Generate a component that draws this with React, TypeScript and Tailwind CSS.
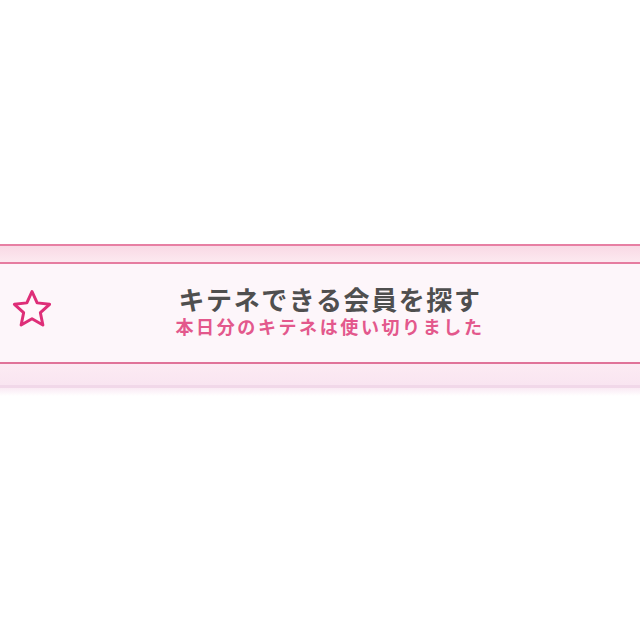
import React from "react";

function StarIcon() {
  // outline star, rounded joins
  const cx = 20;
  const cy = 21;
  const outer = 18.5;
  const inner = 8.8;
  const pts: string[] = [];
  for (let i = 0; i < 10; i++) {
    const r = i % 2 === 0 ? outer : inner;
    const a = (Math.PI / 5) * i - Math.PI / 2;
    pts.push(`${(cx + r * Math.cos(a)).toFixed(2)},${(cy + r * Math.sin(a)).toFixed(2)}`);
  }
  return (
    <svg width="40" height="40" viewBox="0 0 40 40" fill="none">
      <polygon points={pts.join(" ")} stroke="#de2e78" strokeWidth="3" strokeLinejoin="round" fill="#fff7fb" />
    </svg>
  );
}

export default function App() {
  return (
    <div className="w-[640px] h-[640px] bg-white flex flex-col" style={{ fontFamily: '"Noto Sans CJK JP", "Noto Sans", sans-serif' }}>
      <div className="h-[244px]" />
      <div className="h-[2px] bg-[#e77fa3]" />
      <div className="h-[16px] bg-gradient-to-b from-[#f9d9e5] to-[#fce9f0]" />
      <div className="h-[2px] bg-[#e67ca0]" />
      <div className="h-[98px] bg-[#fdf6fa] flex items-center">
        <div className="w-[62px] flex justify-center pl-[2px] mb-[8px]">
          <StarIcon />
        </div>
        <div className="flex-1 flex flex-col items-center pr-[42px] mb-[6px]">
          <div className="text-[26px] leading-[28px] font-bold text-[#4f4f4f] tracking-[1.6px]">キテネできる会員を探す</div>
          <div className="mt-[3px] text-[18px] leading-[20px] font-bold text-[#e3588c] tracking-[2.6px]">本日分のキテネは使い切りました</div>
        </div>
      </div>
      <div className="h-[2px] bg-[#e07399]" />
      <div className="h-[21px] bg-gradient-to-b from-[#fcebf3] to-[#f9e5f1]" />
      <div className="h-[3px] bg-[#f1d8e9]" />
      <div className="h-[8px] bg-gradient-to-b from-[#faeaf4] to-white" />
      <div className="flex-1" />
    </div>
  );
}
